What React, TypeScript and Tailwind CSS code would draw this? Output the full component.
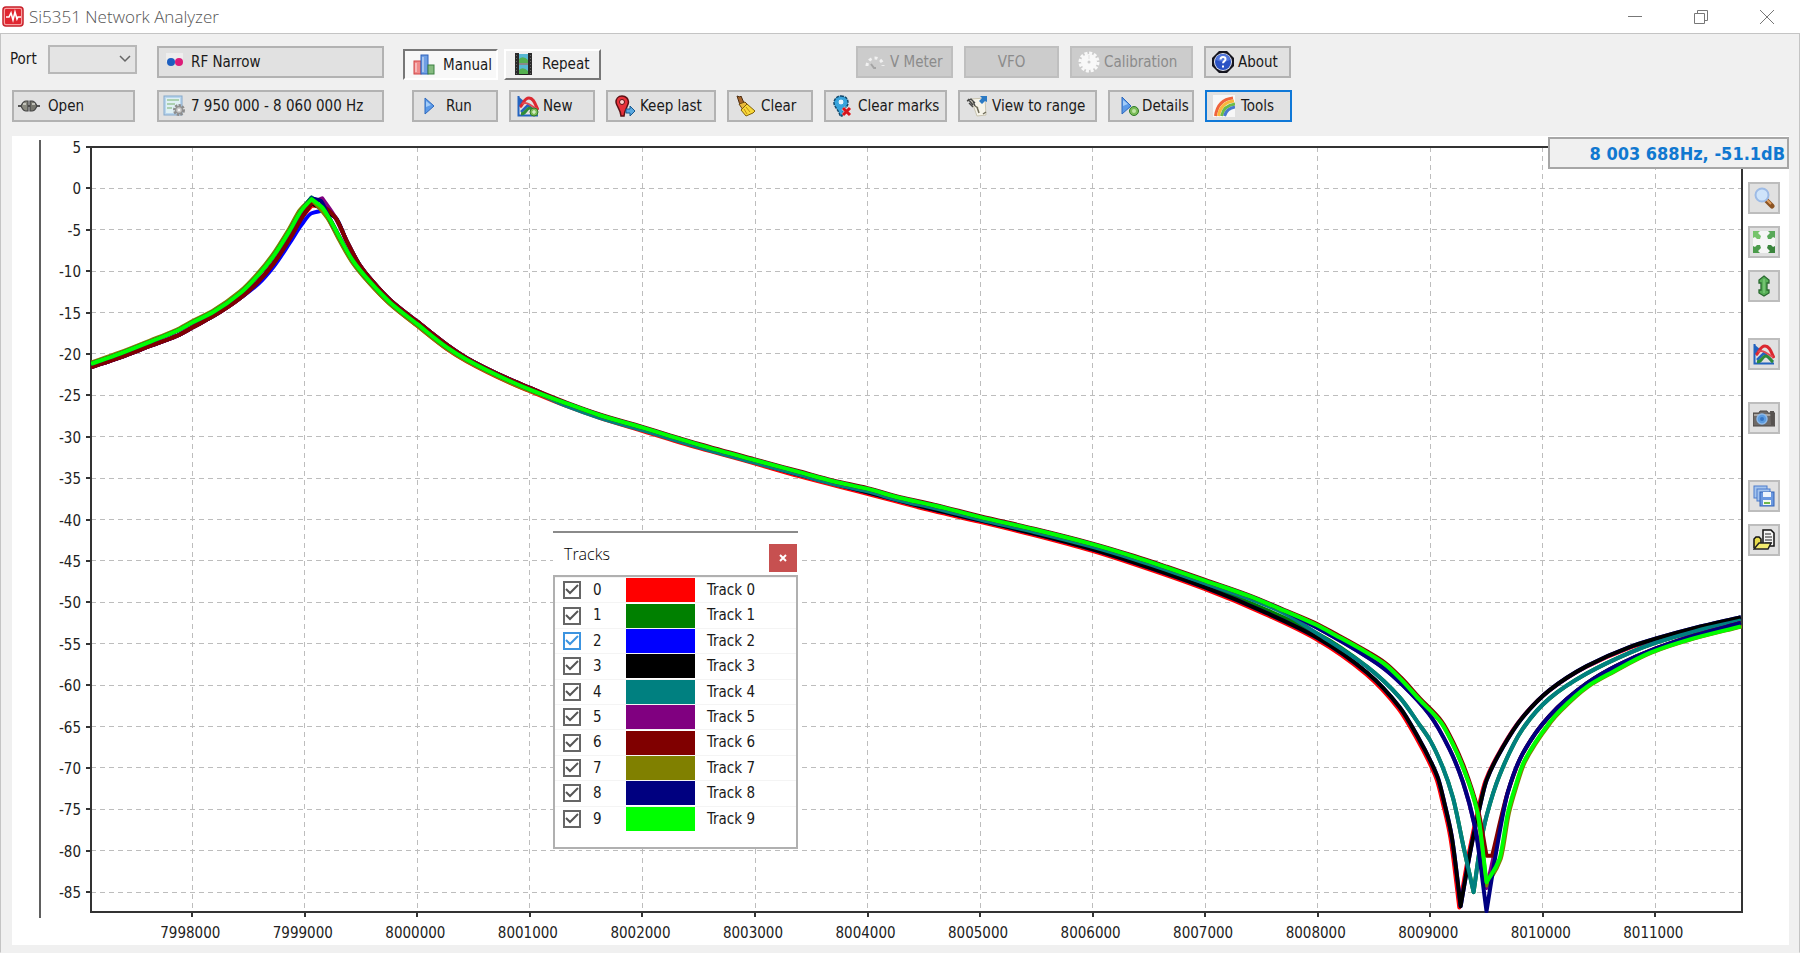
import { useLayoutEffect, useRef, useState } from 'react';
import type { ReactNode } from 'react';
import clsx from 'clsx';

type Point = [number, number];

type Track = {
  id: number;
  color: string;
  points: Point[];
};

// Points are [kHz above 8 MHz, dB]
const RISE_HIGH: Point[] = [
  [-2.9, -21.2], [-2.64, -19.95], [-2.37, -18.5], [-2.135, -17.2], [-2, -16.2], [-1.81, -14.9], [-1.57, -12.6],
  [-1.41, -10.4], [-1.28, -8.2], [-1.13, -5], [-1.03, -2.65],
];
const RISE_LOW: Point[] = [
  [-2.9, -21.6], [-2.64, -20.4], [-2.37, -19], [-2.135, -17.8], [-2, -16.8], [-1.81, -15.4], [-1.57, -13.2],
  [-1.41, -11.2], [-1.28, -9.1], [-1.13, -6], [-1.03, -3.6],
];
const FALL_HIGH: Point[] = [
  [-0.73, -3.5], [-0.63, -6.3], [-0.52, -9.1], [-0.4, -11.2], [-0.24, -13.5], [0, -16.1], [0.263, -18.9], [0.44, -20.5],
  [0.825, -23.1], [1, -24.1],
];
const FALL_LOW: Point[] = [
  [-0.79, -3.45], [-0.685, -6.1], [-0.57, -8.8], [-0.42, -11.3], [-0.24, -13.8], [0, -16.4], [0.263, -19.2],
  [0.44, -20.7], [0.825, -23.3], [1, -24.3],
];
const SLOPE: Point[] = [
  [1.33, -26], [1.62, -27.4], [2, -28.9], [2.216, -29.8], [2.51, -31], [2.99, -32.8], [3.4, -34.3], [3.7, -35.4],
  [4, -36.3], [4.29, -37.4], [4.59, -38.3], [5, -39.7], [5.48, -41.2], [6, -43], [6.37, -44.5], [6.66, -45.8],
  [7, -47.4], [7.38, -49.2], [7.7, -51],
];
const SLOPE_LOW: Point[] = [
  [1.33, -26.1], [1.62, -27.5], [2, -29.1], [2.51, -31.2], [2.99, -33], [3.4, -34.6], [4, -36.7], [4.59, -38.8],
  [5, -40.1], [5.48, -41.7], [6, -43.6], [6.37, -45.2], [7, -48.2], [7.55, -51.3],
];
const NOTCH_9300: Point[] = [
  [8, -54.3], [8.44, -58.5], [8.73, -62.7], [8.9, -66.5], [9, -69.1], [9.07, -71.3], [9.125, -74.2], [9.19, -78.2],
  [9.27, -86.7], [9.36, -79.8], [9.435, -75], [9.5, -71.5], [9.645, -67.5], [9.82, -63.9], [10.06, -60.6],
  [10.39, -57.7], [10.77, -55.4], [11, -54.4], [11.35, -53.1], [11.76, -51.8],
];
const NOTCH_9400: Point[] = [
  [8, -53.8], [8.44, -57.8], [8.73, -61.5], [8.9, -64.7], [9, -66.7], [9.11, -69.9], [9.2, -73.5],
  [9.3, -79.8], [9.385, -85], [9.45, -79], [9.5, -75.8], [9.615, -70.9], [9.82, -65.3], [10.06, -61.6],
  [10.39, -58.6], [10.77, -56.1], [11, -54.9], [11.35, -53.5], [11.76, -52.2],
];
const NOTCH_9500: Point[] = [
  [8, -53.1], [8.44, -56.6], [8.59, -58], [8.74, -59.8], [8.99, -63.5], [9.17, -67.7], [9.29, -71.7], [9.395, -77],
  [9.5, -87.3], [9.585, -80.2], [9.69, -72.9], [9.82, -68.3], [10.06, -63.7], [10.39, -59.8], [10.65, -57.7],
  [11, -55.6], [11.35, -54], [11.76, -52.5],
];
const NOTCH_9500_HIGH: Point[] = [
  [8, -52.8], [8.15, -53.9], [8.44, -56.1], [8.59, -57.4], [8.74, -59.3], [8.9, -61.7], [9.095, -64.5], [9.2, -67.1],
  [9.29, -69.9], [9.42, -75.4],
];
const TAIL_LOW: Point[] = [
  [9.615, -81], [9.69, -75.4], [9.75, -72.5], [9.83, -69.3], [10.06, -64.5], [10.15, -63.1], [10.39, -60.2],
  [10.62, -58.4], [10.95, -56.1], [11.3, -54.5], [11.76, -52.9],
];

const shift = (points: Point[], dx: number, dy: number): Point[] => points.map(([x, y]) => [x + dx, y + dy]);

const TRACKS: Track[] = [
  {
    id: 0,
    color: '#ff0000',
    points: [...RISE_LOW, [-0.94, -2.1], [-0.85, -2.1], ...shift(FALL_LOW, 0, -0.2), ...shift([...SLOPE_LOW, ...NOTCH_9300], -0.012, -0.15)],
  },
  { id: 1, color: '#008000', points: [...RISE_HIGH, [-0.94, -1.1], ...FALL_LOW, ...SLOPE.slice(0, -3), [7, -47.8], ...NOTCH_9400] },
  {
    id: 2,
    color: '#0000ff',
    points: [...RISE_LOW.slice(0, 7), [-1.41, -11.5], [-1.28, -9.5], [-1.13, -6.5], [-1.03, -4.4], [-0.94, -3], [-0.85, -2.7], ...FALL_HIGH, ...SLOPE_LOW, ...NOTCH_9300],
  },
  { id: 3, color: '#000000', points: [...RISE_LOW, [-0.94, -1.8], ...FALL_HIGH, ...SLOPE_LOW, ...NOTCH_9300] },
  { id: 4, color: '#008080', points: [...RISE_HIGH, [-0.94, -1.1], ...FALL_LOW, ...shift(SLOPE, 0, -0.3), ...NOTCH_9400] },
  { id: 5, color: '#800080', points: [...RISE_LOW, [-0.94, -1.8], [-0.845, -1.2], ...FALL_HIGH, ...SLOPE, ...NOTCH_9500.slice(0, 8), [9.5, -84.5], [9.575, -80], ...NOTCH_9500.slice(10)] },
  { id: 6, color: '#800000', points: [...RISE_LOW, [-0.94, -1.7], [-0.85, -2.1], ...FALL_HIGH, ...shift(SLOPE, 0, 0.1), ...shift(NOTCH_9500_HIGH, 0.008, 0.1), [9.5, -80.6], [9.55, -80.6], ...NOTCH_9500.slice(10)] },
  { id: 7, color: '#808000', points: [...shift(RISE_HIGH, -0.01, 0.1), [-0.94, -1.3], ...shift(FALL_LOW, -0.01, -0.1), ...SLOPE, ...NOTCH_9500_HIGH, [9.5, -84.2], ...shift(TAIL_LOW, 0.01, 0)] },
  { id: 8, color: '#000080', points: [...RISE_HIGH, [-0.94, -1.2], [-0.86, -1.5], ...FALL_LOW, ...SLOPE, ...NOTCH_9500] },
  { id: 9, color: '#00ff00', points: [...RISE_HIGH, [-0.94, -1.3], [-0.85, -2.25], ...FALL_LOW, ...SLOPE, ...NOTCH_9500_HIGH, [9.5, -83.8], ...TAIL_LOW] },
];

// Cubic path through the points, peaks and notches stay sharp
function curvePath(points: Point[]) {
  const slope = (a: Point, b: Point) => (b[1] - a[1]) / (b[0] - a[0]);
  let d = `M${points[0][0]},${points[0][1]}`;
  for (let i = 0; i < points.length - 1; i++) {
    const p = points[i];
    const q = points[i + 1];
    const s = slope(p, q);
    const before = i > 0 ? slope(points[i - 1], p) : s;
    const after = i < points.length - 2 ? slope(q, points[i + 2]) : s;
    const out = before * s > 0 ? (2 * before * s) / (before + s) : s;
    const into = after * s > 0 ? (2 * after * s) / (after + s) : s;
    const h = (q[0] - p[0]) / 3;
    d += `C${p[0] + h},${p[1] + out * h} ${q[0] - h},${q[1] - into * h} ${q[0]},${q[1]}`;
  }
  return d;
}

const DB_TICKS = Array.from({ length: 19 }, (_, i) => 5 - i * 5);
const KHZ_TICKS = Array.from({ length: 14 }, (_, i) => i - 2);

function Chart({ visible }: { visible: boolean[] }) {
  const ref = useRef<HTMLDivElement>(null);
  const [size, setSize] = useState({ width: 1731, height: 809 });

  useLayoutEffect(() => {
    const el = ref.current;
    if (!el) return;
    const measure = () => setSize({ width: el.clientWidth, height: el.clientHeight });
    measure();
    const observer = new ResizeObserver(measure);
    observer.observe(el);
    return () => observer.disconnect();
  }, []);

  const left = 79;
  const top = 11;
  const right = size.width - 1;
  const bottom = size.height - 33;
  const xAt = (khz: number) => left + ((khz + 2.9) / 14.67) * (right - left);
  const yAt = (db: number) => top + ((5 - db) / 92.4) * (bottom - top);
  const crisp = (n: number) => Math.floor(n) + 0.5;

  return (
    <div ref={ref} className="relative min-h-0 min-w-0 flex-1">
      <svg className="absolute inset-0 h-full w-full" role="img" aria-label="Frequency response">
        <defs>
          <clipPath id="plot">
            <rect x={left} y={top} width={right - left} height={bottom - top + 1} />
          </clipPath>
        </defs>
        <line x1={28} x2={28} y1={4} y2={bottom + 6} stroke="#606060" strokeWidth={2} />
        <g stroke="#bdbdbd" strokeDasharray="5 4">
          {DB_TICKS.slice(1).map((db) => (
            <line key={db} x1={left} x2={right} y1={crisp(yAt(db))} y2={crisp(yAt(db))} />
          ))}
          {KHZ_TICKS.map((khz) => (
            <line key={khz} x1={crisp(xAt(khz))} x2={crisp(xAt(khz))} y1={top} y2={bottom} />
          ))}
        </g>
        <rect x={left} y={top} width={right - left} height={bottom - top} fill="none" stroke="#333" strokeWidth={2} />
        <g stroke="#333" strokeWidth={2}>
          {DB_TICKS.map((db) => (
            <line key={db} x1={left - 5} x2={left} y1={Math.round(yAt(db))} y2={Math.round(yAt(db))} />
          ))}
          {KHZ_TICKS.map((khz) => (
            <line key={khz} x1={Math.round(xAt(khz))} x2={Math.round(xAt(khz))} y1={bottom} y2={bottom + 5} />
          ))}
        </g>
        <g fontSize={15} fill="#222">
          {DB_TICKS.map((db) => (
            <text key={db} x={left - 10} y={yAt(db) + 6} textAnchor="end">
              {db}
            </text>
          ))}
          {KHZ_TICKS.map((khz) => (
            <text key={khz} x={xAt(khz) - 2} y={bottom + 26} textAnchor="middle">
              {8000000 + khz * 1000}
            </text>
          ))}
        </g>
        <g clipPath="url(#plot)" fill="none" strokeWidth={4} strokeLinejoin="round">
          {TRACKS.filter((t) => visible[t.id]).map((t) => (
            <path key={t.id} stroke={t.color} d={curvePath(t.points.map(([x, y]) => [xAt(x), yAt(y)]))} />
          ))}
        </g>
      </svg>
    </div>
  );
}

function Icon({ children }: { children: ReactNode }) {
  return (
    <svg viewBox="0 0 22 22" className="h-[22px] w-[22px] shrink-0" aria-hidden="true">
      {children}
    </svg>
  );
}

const AppIcon = () => (
  <Icon>
    <rect x="1" y="1" width="20" height="19" rx="3" fill="#f8a0a0" stroke="#c8202a" strokeWidth="1.5" />
    <rect x="3" y="3" width="16" height="15" rx="1" fill="#e02630" />
    <path d="M4 11h3l2-4 2 7 2-8 2 7 1-2h3" fill="none" stroke="#fff" strokeWidth="1.6" />
  </Icon>
);

const PlugIcon = () => (
  <Icon>
    <path d="M0 11h22" stroke="#555" strokeWidth="2" />
    <path d="M10 6H8c-3 0-4 3-5 5 1 2 2 5 5 5h2z" fill="#8a8a80" stroke="#444" strokeWidth="1.2" />
    <path d="M12 6h2c3 0 4 3 5 5-1 2-2 5-5 5h-2z" fill="#77776e" stroke="#444" strokeWidth="1.2" />
    <path d="M5 9h3M14 9h3" stroke="#d8d8d0" strokeWidth="1.4" />
  </Icon>
);

const DotsIcon = () => (
  <Icon>
    <rect x="3" y="2" width="17" height="9" fill="#eeeeee" />
    <circle cx="8" cy="11" r="4" fill="#1d5fc0" />
    <circle cx="16" cy="11" r="4" fill="#dc1c78" />
  </Icon>
);

const FormIcon = () => (
  <Icon>
    <rect x="1" y="1" width="18" height="19" fill="#b9d6ee" stroke="#86a9cb" />
    <rect x="3" y="3" width="14" height="15" fill="#dff0f4" />
    <path d="M4 5h12M4 9h8M4 13h5" stroke="#9cc59a" strokeWidth="1.5" />
    <circle cx="16" cy="15" r="4" fill="none" stroke="#8c8c8c" strokeWidth="4" strokeDasharray="2 1" />
    <circle cx="16" cy="15" r="3.5" fill="#c8c8c8" stroke="#909090" strokeWidth="1.5" />
    <circle cx="16" cy="15" r="1.3" fill="#f2f2f2" />
  </Icon>
);

const BarsIcon = () => (
  <Icon>
    <rect x="1" y="7" width="7" height="13" fill="#f08a8a" stroke="#cf4444" />
    <rect x="8" y="1" width="7" height="19" fill="#6f9fe4" stroke="#2c60ba" />
    <rect x="15" y="11" width="6" height="9" fill="#86bb80" stroke="#3a8040" />
    <path d="M3 9v9M10 3v15" stroke="#fff" opacity=".4" strokeWidth="2" />
  </Icon>
);

const FilmIcon = () => (
  <Icon>
    <path d="M3 0h4v22H3zM16 0h4v22h-4z" fill="#2b2b2b" />
    <rect x="7" y="1" width="9" height="9" fill="#58b8d4" />
    <rect x="7" y="12" width="9" height="9" fill="#58b8d4" />
    <path d="M7 6q4-4 9 1v3H7zM7 17q4-4 9 1v3H7z" fill="#54b050" />
    <path d="M7 11h9M7 21.500h9" stroke="#222" />
    <path d="M4.500 2v19M18.500 2v19" stroke="#666" strokeDasharray="1 2" />
  </Icon>
);

const PlayIcon = () => (
  <Icon>
    <path d="M5 3v16l9-8z" fill="#5b9ae8" stroke="#2d68bd" strokeLinejoin="round" />
    <path d="M6 6v6l5-2z" fill="#a4cdf8" />
  </Icon>
);

const GraphIcon = ({ add }: { add?: boolean }) => (
  <Icon>
    <path d="M1.500 1v19.500H21" fill="none" stroke="#2464c0" strokeWidth="2" />
    <path d="M2 2l6 5-6 5z" fill="#2464c0" />
    <path d="M4 17l7-7 9 9" fill="none" stroke="#2464c0" strokeWidth="2.500" />
    <path d="M3 12C6 10 7 3 12 3s6 6 9 12" fill="none" stroke="#dc2830" strokeWidth="3" />
    <path d="M5 9c5-3 9 2 15 5" fill="none" stroke="#e04c54" strokeWidth="2" />
    <path d="M4 19c5 0 5-6 9-6 3 0 4 4 7 6" fill="none" stroke="#2e8b3a" strokeWidth="3" />
    {add && (
      <>
        <circle cx="17" cy="17" r="4" fill="#7cbc58" stroke="#2f7a28" />
        <path d="M15 17h4M17 15v4" stroke="#e6f7dc" strokeWidth="1.200" />
      </>
    )}
  </Icon>
);

const PinIcon = () => (
  <Icon>
    <path d="M8 1c4 0 6.500 3 6.500 6 0 4-4 7-4.500 14H7C6.500 14 2 11 2 7c0-3 2-6 6-6z" fill="#e8313a" stroke="#5c1014" strokeWidth="1.500" />
    <circle cx="8" cy="7" r="2.500" fill="#ffd0cc" stroke="#5c1014" />
    <path d="M12 14h4v-3l5 5-5 5v-3h-4z" fill="#58a8e0" stroke="#17588f" />
  </Icon>
);

const BroomIcon = () => (
  <Icon>
    <path d="M2 1l3 1 1-1 3 7-4 2z" fill="#a8662c" stroke="#4a2c10" />
    <path d="M4 9l6-2 3 3-5 5z" fill="#e8b83c" stroke="#6c4810" />
    <path d="M12 9l8 7-2 2-7 3-5-6z" fill="#f8d838" stroke="#80600c" />
    <path d="M11 12l4 5M9 14l3 5" stroke="#c08c14" />
  </Icon>
);

const ClearMarksIcon = () => (
  <Icon>
    <path d="M9 1c5 0 7 3 7 7 0 4-5 6-6 13H8C7 15 2 12 2 8c0-4 3-7 7-7z" fill="#38a4dc" stroke="#12486c" strokeWidth="1.500" strokeDasharray="3 1" />
    <circle cx="9" cy="7" r="3" fill="#e4f4fc" stroke="#38a4dc" />
    <path d="M11 13l7 7M18 13l-7 7" stroke="#f4dcdc" strokeWidth="4" />
    <path d="M11 13l7 7M18 13l-7 7" stroke="#d8141c" strokeWidth="3" />
  </Icon>
);

const RangeIcon = () => (
  <Icon>
    <path d="M5 4l14-1 1 17-9 1z" fill="#f6f4ea" stroke="#c9c4b0" />
    <path d="M1 6l4-2 4 4M3 8l4 4M7 6l2 5M2 4l5 6" stroke="#4a4a48" strokeWidth="1.400" fill="none" />
    <path d="M14 1h7v6l-2-1-3 3-3-3 3-3z" fill="#2c7ac4" />
    <path d="M11 12l2 6M9 11l3 2M17 19l3-2" stroke="#6d6a58" strokeWidth="1.500" />
  </Icon>
);

const DetailsIcon = () => (
  <Icon>
    <path d="M4 2v17l9-8z" fill="#5b9ae8" stroke="#2d68bd" strokeLinejoin="round" />
    <path d="M5 5v6l5-2z" fill="#a4cdf8" />
    <circle cx="16" cy="16" r="4.500" fill="#7cbc58" stroke="#2f7a28" />
    <circle cx="16" cy="16" r="2" fill="#bfe4a4" />
  </Icon>
);

const RainbowIcon = () => (
  <Icon>
    <rect width="22" height="22" fill="#f7f7f7" />
    <g fill="none" strokeWidth="3">
      <path d="M2.500 21C4 10 10 4 20 3" stroke="#f0643c" />
      <path d="M5.500 21C7 12 12 7 21 6" stroke="#f8b83c" />
      <path d="M8.500 21C10 14 14 10 22 9" stroke="#6cbc48" />
      <path d="M11.500 21C13 16 16 13 22 12" stroke="#4878d0" />
    </g>
  </Icon>
);

const HelpIcon = () => (
  <Icon>
    <path d="M7 0h8l7 7v8l-7 7H7l-7-7V7z" fill="#15151f" />
    <circle cx="11" cy="11" r="9" fill="#dfe4f4" />
    <circle cx="11" cy="11" r="8" fill="#2a52c4" />
    <path d="M4 9a7 6 0 0 1 14 0q-7 3-14 0z" fill="#5478dc" />
    <path d="M8.500 8.500q0-2.500 2.500-2.500t2.500 2.300c0 1.700-2.500 2-2.500 4M11 14.500v2" fill="none" stroke="#fff" strokeWidth="2" />
  </Icon>
);

const MeterIcon = () => (
  <Icon>
    <path d="M3 15a8 8 0 1 1 16 0" fill="none" stroke="#f1f1f1" strokeWidth="3" strokeDasharray="3 3" />
    <path d="M7 13l3 4h2" fill="none" stroke="#a4a4a4" strokeWidth="2" />
  </Icon>
);

const GearIcon = () => (
  <Icon>
    <circle cx="11" cy="11" r="9" fill="none" stroke="#f8f8f8" strokeWidth="3" strokeDasharray="3 1.700" />
    <circle cx="11" cy="11" r="8" fill="#f8f8f8" />
    <circle cx="11" cy="11" r="1.500" fill="#cccccc" />
    <path d="M11 4v4" stroke="#e0e0e0" />
  </Icon>
);

const LensIcon = () => (
  <Icon>
    <path d="M13 13l6 6" stroke="#8c5424" strokeWidth="5" strokeLinecap="round" />
    <path d="M14 13l4 4" stroke="#e0a060" strokeWidth="2" />
    <circle cx="9" cy="8" r="6.500" fill="#cfe4fa" stroke="#9dbbe6" strokeWidth="2" />
  </Icon>
);

const ExpandIcon = () => (
  <Icon>
    <rect width="22" height="22" fill="#f6f6f6" />
    <path d="M0 0h7L5 2l3 3-1 3-3 0-2-2-2 1z" fill="#76c46c" />
    <path d="M22 0h-7l2 2-3 3 1 3 3 0 2-2 2 1z" fill="#58a858" />
    <path d="M0 22h7l-2-2 3-3-1-3-3 0-2 2-2-1z" fill="#4c9c4c" />
    <path d="M22 22h-7l2-2-3-3 1-3 3 0 2 2 2-1z" fill="#3a843c" />
  </Icon>
);

const VerticalIcon = () => (
  <Icon>
    <path d="M11 1l5 4v3h-2v7h2v3l-5 3-5-3v-3h2V8H6V5z" fill="#58b058" stroke="#2a6a30" strokeWidth="1.300" />
    <path d="M11 4v14" stroke="#90d48c" />
  </Icon>
);

const CameraIcon = () => (
  <Icon>
    <path d="M0 6h6l1-2h7l1 2h7v13H0z" fill="#6e6a68" stroke="#4a4644" />
    <path d="M1 8h20" stroke="#aaa5a0" strokeWidth="2" />
    <path d="M17 4h4v14h-3z" fill="#565250" />
    <circle cx="9" cy="12" r="5" fill="#5c9ce0" stroke="#8cb8e8" strokeWidth="1.500" />
    <circle cx="9" cy="12" r="2" fill="#3474c4" />
  </Icon>
);

const SaveAllIcon = () => (
  <Icon>
    <rect x="1" y="1" width="13" height="12" fill="#a4c4ee" stroke="#4c7ccc" />
    <rect x="4" y="4" width="13" height="12" fill="#a4c4ee" stroke="#4c7ccc" />
    <rect x="7" y="7" width="14" height="14" fill="#6a98e0" stroke="#3464b8" />
    <rect x="10" y="7" width="8" height="5" fill="#eef4fc" />
    <rect x="10" y="15" width="8" height="5" fill="#f4faf0" />
    <path d="M11 18h6" stroke="#70b84c" strokeWidth="2" />
  </Icon>
);

const FolderIcon = () => (
  <Icon>
    <path d="M10 1h8l3 3v13H10z" fill="#f4f4f4" stroke="#111" strokeWidth="1.500" />
    <path d="M12 5h6M12 8h7M12 11h7M12 14h7" stroke="#222" strokeWidth="1.200" />
    <path d="M1 19v-9l2-2h3l2 2v5" fill="#e8dc4c" stroke="#111" strokeWidth="1.500" />
    <path d="M1 20l5-6h12l-3 6z" fill="#f4ec70" stroke="#222" strokeWidth="1.500" />
  </Icon>
);

type ToolButtonProps = {
  icon?: ReactNode;
  label: string;
  className: string;
  disabled?: boolean;
  active?: boolean;
};

function ToolButton({ icon, label, className, disabled, active }: ToolButtonProps) {
  return (
    <button
      type="button"
      disabled={disabled}
      className={clsx(
        'flex h-8 shrink-0 items-center border-2 whitespace-nowrap',
        disabled ? 'border-[#bfbfbf] bg-[#cccccc] text-[#8b8b8b]' : 'bg-[#e1e1e1]',
        !disabled && (active ? 'border-[#0f78d7]' : 'border-[#b2b2b2]'),
        className,
      )}
    >
      {icon}
      {label}
    </button>
  );
}

function SideButton({ icon, label, className }: { icon: ReactNode; label: string; className?: string }) {
  return (
    <button
      type="button"
      aria-label={label}
      className={clsx('flex h-8 w-8 shrink-0 items-center justify-center border-2 border-[#bdbdbd] bg-[#e1e1e1]', className)}
    >
      {icon}
    </button>
  );
}

function TitleBar() {
  return (
    <header className="flex h-[33px] items-center bg-white">
      <div className="flex flex-1 items-center gap-[5px] pl-0.5">
        <AppIcon />
        <h1 className="font-['Open_Sans',sans-serif] text-[17px] font-light text-[#555]">Si5351 Network Analyzer</h1>
      </div>
      <div className="flex text-[#777]">
        <button type="button" aria-label="Minimize" className="flex h-8 w-[66px] items-center justify-center">
          <svg viewBox="0 0 14 14" className="h-3.5 w-3.5" fill="none" stroke="currentColor">
            <path d="M0 6.500h14" />
          </svg>
        </button>
        <button type="button" aria-label="Restore" className="flex h-8 w-[66px] items-center justify-center">
          <svg viewBox="0 0 14 14" className="h-3.5 w-3.5" fill="none" stroke="currentColor">
            <path d="M.5 3.500h10v10H.5zM3.500 3.500v-3h10v10h-3" />
          </svg>
        </button>
        <button type="button" aria-label="Close" className="flex h-8 w-[66px] items-center justify-center">
          <svg viewBox="0 0 14 14" className="h-3.5 w-3.5" fill="none" stroke="currentColor">
            <path d="M0 0l14 14M14 0L0 14" />
          </svg>
        </button>
      </div>
    </header>
  );
}

function Toolbar() {
  const [mode, setMode] = useState('manual');
  const modeClass = (on: boolean) =>
    on
      ? 'border-t-[#777] border-l-[#777] border-r-white border-b-white bg-[#f8f8f8]'
      : 'border-t-white border-l-white border-r-[#777] border-b-[#777] bg-[#f0f0f0]';

  return (
    <div className="flex flex-col gap-3 pt-3 pb-[14px]">
      <div className="flex h-8 items-center">
        <div className="flex w-[156px] shrink-0 items-center pb-1.5 pl-[9px]">
          <label htmlFor="port" className="w-[38px]">
            Port
          </label>
          <div className="grid items-center">
            <select
              id="port"
              className="col-start-1 row-start-1 h-[29px] w-[89px] appearance-none border-2 border-[#b8b8b8] bg-[#e4e4e4]"
            >
              <option></option>
            </select>
            <svg viewBox="0 0 12 8" className="pointer-events-none col-start-1 row-start-1 mr-1.5 h-2 w-3 justify-self-end" fill="none" stroke="#666" strokeWidth="1.500">
              <path d="M1 1l5 5 5-5" />
            </svg>
          </div>
        </div>
        <ToolButton icon={<DotsIcon />} label="RF Narrow" className="w-[227px] gap-1.5 pl-1" />
        <div className="ml-[19px] flex gap-1.5 pt-1">
          <button
            type="button"
            aria-pressed={mode === 'manual'}
            onClick={() => setMode('manual')}
            className={clsx('flex h-[31px] w-[95px] items-center gap-2 border-2 pt-0.5 pl-2', modeClass(mode === 'manual'))}
          >
            <BarsIcon />
            Manual
          </button>
          <button
            type="button"
            aria-pressed={mode === 'repeat'}
            onClick={() => setMode('repeat')}
            className={clsx('flex h-[31px] w-[97px] items-center gap-2 border-2 pl-1.5', modeClass(mode === 'repeat'))}
          >
            <FilmIcon />
            Repeat
          </button>
        </div>
        <div className="ml-[255px] flex gap-[11px]">
          <ToolButton icon={<MeterIcon />} label="V Meter" disabled className="w-[97px] gap-1 pl-1.5" />
          <ToolButton label="VFO" disabled className="w-[95px] justify-center" />
          <ToolButton icon={<GearIcon />} label="Calibration" disabled className="w-[123px] gap-1 pl-1.5" />
          <ToolButton icon={<HelpIcon />} label="About" className="w-[87px] gap-1 pl-1.5" />
        </div>
      </div>
      <div className="flex h-8 items-center pl-[11px]">
        <ToolButton icon={<PlugIcon />} label="Open" className="w-[123px] gap-2 pl-1" />
        <ToolButton icon={<FormIcon />} label="7 950 000 - 8 060 000 Hz" className="ml-[22px] w-[227px] gap-1.5 pl-1" />
        <div className="ml-7 flex gap-[11px]">
          <ToolButton icon={<PlayIcon />} label="Run" className="w-[86px] gap-1 pl-1.5" />
          <ToolButton icon={<GraphIcon add />} label="New" className="w-[86px] gap-1 pl-1.5" />
          <ToolButton icon={<PinIcon />} label="Keep last" className="w-[110px] gap-1 pl-1.5" />
          <ToolButton icon={<BroomIcon />} label="Clear" className="w-[86px] gap-1 pl-1.5" />
          <ToolButton icon={<ClearMarksIcon />} label="Clear marks" className="w-[123px] gap-1 pl-1.5" />
          <ToolButton icon={<RangeIcon />} label="View to range" className="w-[139px] gap-1 pl-1.5" />
          <ToolButton icon={<DetailsIcon />} label="Details" className="w-[86px] gap-0.5 pl-2" />
          <ToolButton icon={<RainbowIcon />} label="Tools" active className="w-[87px] gap-1.5 pl-1.5" />
        </div>
      </div>
    </div>
  );
}

type TracksWindowProps = {
  visible: boolean[];
  onToggle: (id: number) => void;
  onClose: () => void;
};

function TracksWindow({ visible, onToggle, onClose }: TracksWindowProps) {
  return (
    <section className="absolute top-[395px] left-[541px] w-[245px] border-t-2 border-[#8a8a8a] bg-white">
      <div className="flex h-[42px] items-center justify-between pr-px pl-[11px]">
        <h2 className="font-['Open_Sans',sans-serif] text-base font-light text-black">Tracks</h2>
        <button
          type="button"
          aria-label="Close tracks"
          onClick={onClose}
          className="mt-2 flex h-7 w-7 items-center justify-center bg-[#c75050]"
        >
          <svg viewBox="0 0 8 8" className="h-2 w-2" stroke="#fff" strokeWidth="2">
            <path d="M1 1l6 6M7 1L1 7" />
          </svg>
        </button>
      </div>
      <ul className="flex h-[274px] flex-col border-2 border-[#b0b0b0] pb-4">
        {TRACKS.map((track) => (
          <li key={track.id} className="flex flex-1 items-center border-t border-[#f4f4f4] pl-2">
            <span className="grid items-center justify-items-center">
              <input
                id={`track-${track.id}`}
                type="checkbox"
                checked={visible[track.id]}
                onChange={() => onToggle(track.id)}
                className={clsx(
                  'col-start-1 row-start-1 h-[18px] w-[18px] appearance-none border-2 bg-white',
                  track.id === 2 ? 'border-[#3c94e0]' : 'border-[#666]',
                )}
              />
              {visible[track.id] && (
                <svg viewBox="0 0 14 12" className="pointer-events-none col-start-1 row-start-1 h-3 w-3.5" fill="none" stroke={track.id === 2 ? '#3c94e0' : '#555'} strokeWidth="2">
                  <path d="M1 5l4 4 8-8" />
                </svg>
              )}
            </span>
            <label htmlFor={`track-${track.id}`} className="flex flex-1 items-center self-stretch pl-3">
              <span className="w-[33px]">{track.id}</span>
              <span className="h-6 w-[69px]" style={{ backgroundColor: track.color }} />
              <span className="pl-3">Track {track.id}</span>
            </label>
          </li>
        ))}
      </ul>
    </section>
  );
}

export default function App() {
  const [visible, setVisible] = useState<boolean[]>(TRACKS.map(() => true));
  const [showTracks, setShowTracks] = useState(true);

  const toggleTrack = (id: number) => {
    setVisible((prev) => prev.map((v, i) => (i === id ? !v : v)));
  };

  return (
    <div className="flex min-h-screen flex-col bg-white font-['DejaVu_Sans_Condensed','DejaVu_Sans',sans-serif] text-[15px] text-[#1a1a1a]">
      <TitleBar />
      <main className="flex flex-1 flex-col border border-[#c4c4c4] border-b-transparent bg-[#f0f0f0] pb-[7px]">
        <Toolbar />
        <div className="relative mr-2.5 ml-[11px] flex flex-1 bg-white">
          <Chart visible={visible} />
          <aside className="flex w-[46px] flex-col gap-3 pt-[46px] pl-[5px]">
            <SideButton icon={<LensIcon />} label="Zoom" />
            <SideButton icon={<ExpandIcon />} label="Fit all" />
            <SideButton icon={<VerticalIcon />} label="Fit vertically" />
            <SideButton icon={<GraphIcon />} label="Graphs" className="mt-6" />
            <SideButton icon={<CameraIcon />} label="Snapshot" className="mt-5" />
            <SideButton icon={<SaveAllIcon />} label="Save all" className="mt-[34px]" />
            <SideButton icon={<FolderIcon />} label="Open file" />
          </aside>
          <output className="absolute top-px right-0 flex h-8 w-[241px] items-center justify-end border-2 border-[#a6a6a6] bg-[#f0f0f0] pr-0.5 text-[18px] font-bold text-[#1078d0]">
            8 003 688Hz, -51.1dB
          </output>
          {showTracks && <TracksWindow visible={visible} onToggle={toggleTrack} onClose={() => setShowTracks(false)} />}
        </div>
      </main>
    </div>
  );
}
